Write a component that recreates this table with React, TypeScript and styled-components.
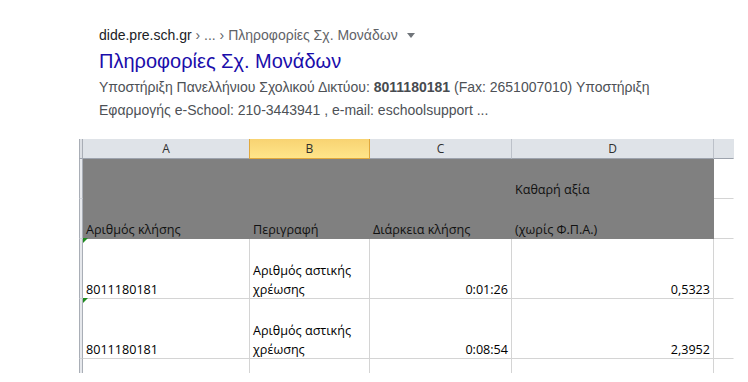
import React from "react";
import styled, { createGlobalStyle } from "styled-components";

const GlobalStyle = createGlobalStyle`
  html, body {
    margin: 0;
    padding: 0;
    background: #fff;
  }
`;

type Row = {
  number: string;
  description: string[];
  duration: string;
  value: string;
};

const rows: Row[] = [
  { number: "8011180181", description: ["Αριθμός αστικής", "χρέωσης"], duration: "0:01:26", value: "0,5323" },
  { number: "8011180181", description: ["Αριθμός αστικής", "χρέωσης"], duration: "0:08:54", value: "2,3952" },
];

const columns = ["A", "B", "C", "D"];

function App() {
  return (
    <Page>
      <GlobalStyle />
      <Result>
        <Breadcrumb>
          <Domain>dide.pre.sch.gr</Domain> › ... › Πληροφορίες Σχ. Μονάδων
          <Caret />
        </Breadcrumb>
        <Title>Πληροφορίες Σχ. Μονάδων</Title>
        <Snippet>
          Υποστήριξη Πανελλήνιου Σχολικού Δικτύου: <b>8011180181</b> (Fax: 2651007010) Υποστήριξη
          <br />
          Εφαρμογής e-School: 210-3443941 , e-mail: eschoolsupport ...
        </Snippet>
      </Result>

      <Sheet>
        <Stub $head />
        {columns.map((c) => (
          <ColHead key={c} $selected={c === "B"}>
            {c}
          </ColHead>
        ))}
        <ColHead $extra />

        <Stub />
        <Cell $fill />
        <Cell $fill />
        <Cell $fill />
        <Cell $fill>
          <Text>Καθαρή αξία</Text>
        </Cell>
        <Cell $last />

        <Stub />
        <Cell $fill>
          <Text>Αριθμός κλήσης</Text>
        </Cell>
        <Cell $fill>
          <Text>Περιγραφή</Text>
        </Cell>
        <Cell $fill>
          <Text>Διάρκεια κλήσης</Text>
        </Cell>
        <Cell $fill>
          <Text>(χωρίς Φ.Π.Α.)</Text>
        </Cell>
        <Cell $last />

        {rows.map((r, i) => (
          <React.Fragment key={i}>
            <Stub />
            <Cell $flag>
              <Text>{r.number}</Text>
            </Cell>
            <Cell>
              <Text>
                {r.description.map((line) => (
                  <div key={line}>{line}</div>
                ))}
              </Text>
            </Cell>
            <Cell $right>
              <Text>{r.duration}</Text>
            </Cell>
            <Cell $right>
              <Text>{r.value}</Text>
            </Cell>
            <Cell $last />
          </React.Fragment>
        ))}

        <Stub />
        <Cell />
        <Cell />
        <Cell />
        <Cell />
        <Cell $last />
      </Sheet>
    </Page>
  );
}

export default App;

const Page = styled.div`
  width: 748px;
  height: 382px;
  overflow: hidden;
  background: #fff;
`;

const Result = styled.div`
  padding: 25px 0 0 99px;
  font-family: "Liberation Sans", Arial, sans-serif;
`;

const Breadcrumb = styled.div`
  display: flex;
  align-items: center;
  font-size: 14px;
  line-height: 20px;
  color: #5f6368;
  white-space: pre;
`;

const Domain = styled.span`
  color: #202124;
`;

const Caret = styled.span`
  width: 0;
  height: 0;
  margin: 1px 0 0 9px;
  border-left: 4px solid transparent;
  border-right: 4px solid transparent;
  border-top: 5px solid #70757a;
`;

const Title = styled.div`
  margin-top: 3px;
  font-size: 20px;
  line-height: 26px;
  color: #1a0dab;
`;

const Snippet = styled.div`
  margin-top: 2px;
  font-size: 14px;
  line-height: 22.5px;
  color: #4d5156;

  & b {
    font-weight: bold;
    color: #474b50;
  }
`;

const Sheet = styled.div`
  display: grid;
  grid-template-columns: 4px 167px 120px 142px 202px 20px;
  grid-template-rows: 20px 40px 40px 60px 60px 60px;
  width: 655px;
  height: 234px;
  margin: 18px 0 0 79px;
  overflow: hidden;
  font-family: "Open Sans", "Noto Sans", sans-serif;
  font-size: 12.6px;
  color: #000;
`;

const Stub = styled.div<{ $head?: boolean }>`
  box-sizing: border-box;
  background: ${({ $head }) => ($head ? "#dcdfe4" : "#e6e8ec")};
  border-left: 1px solid #a9aeb6;
  border-right: 1px solid #a9aeb6;
  border-bottom: 1px solid ${({ $head }) => ($head ? "#9da3ad" : "#cfd3d9")};
`;

const ColHead = styled.div<{ $selected?: boolean; $extra?: boolean }>`
  position: relative;
  z-index: ${({ $selected }) => ($selected ? 1 : 0)};
  box-sizing: border-box;
  display: flex;
  align-items: center;
  justify-content: center;
  margin-left: ${({ $selected }) => ($selected ? "-1px" : "0")};
  font-size: 12px;
  color: #2f2f2f;
  background: ${({ $selected }) =>
    $selected ? "linear-gradient(#f8d372, #ffe58a)" : "#dfe3e8"};
  border-left: ${({ $selected }) => ($selected ? "1px solid #e1a83c" : "none")};
  border-right: 1px solid ${({ $selected, $extra }) => ($selected ? "#e1a83c" : $extra ? "transparent" : "#bcc1c9")};
  border-bottom: 1px solid ${({ $selected }) => ($selected ? "#e1a83c" : "#9da3ad")};
`;

const Cell = styled.div<{ $fill?: boolean; $right?: boolean; $flag?: boolean; $last?: boolean }>`
  position: relative;
  box-sizing: border-box;
  display: flex;
  flex-direction: column;
  justify-content: flex-end;
  align-items: ${({ $right }) => ($right ? "flex-end" : "flex-start")};
  padding: 0 3px;
  background: ${({ $fill }) => ($fill ? "#808080" : "#fff")};
  color: ${({ $fill }) => ($fill ? "#111" : "#000")};
  border-right: 1px solid ${({ $fill, $last }) => ($fill ? "#808080" : $last ? "transparent" : "#d4d4d4")};
  border-bottom: 1px solid ${({ $fill }) => ($fill ? "#808080" : "#d4d4d4")};
  white-space: nowrap;

  &::before {
    content: "";
    display: ${({ $flag }) => ($flag ? "block" : "none")};
    position: absolute;
    top: -1px;
    left: 0;
    width: 0;
    height: 0;
    border-top: 5px solid #1d8a1d;
    border-right: 5px solid transparent;
  }
`;

const Text = styled.div`
  line-height: 19px;
  margin-bottom: -1px;
`;
